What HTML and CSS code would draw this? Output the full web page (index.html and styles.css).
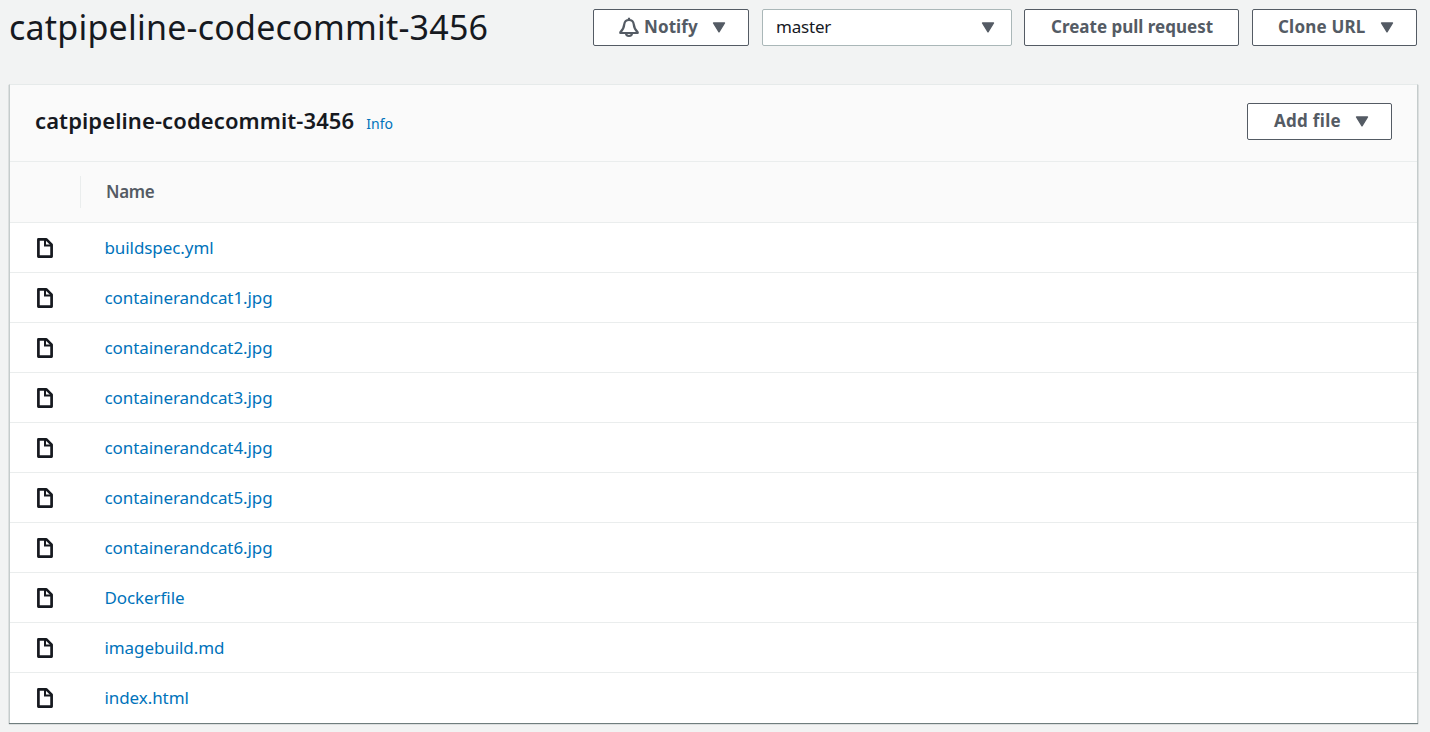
FILE: index.html
```
<!DOCTYPE html>
<html lang="en">
<head>
<meta charset="utf-8">
<title>catpipeline-codecommit-3456</title>
<link rel="stylesheet" href="styles.css">
</head>
<body>
<svg class="sprite" width="0" height="0" aria-hidden="true">
  <symbol id="file" viewBox="0 0 16 20"><path d="M1.400 1.400h8L14.600 6.600v12H1.400z" fill="none" stroke="currentColor" stroke-width="2.700" stroke-linejoin="round"/><path d="M8 1.500v6h6" fill="none" stroke="currentColor" stroke-width="2"/></symbol>
  <symbol id="caret" viewBox="0 0 14 11"><path d="M1.500 1h11L7 9.800z" fill="currentColor" stroke="currentColor" stroke-width="1.400" stroke-linejoin="round"/></symbol>
  <symbol id="bell" viewBox="0 0 20 21"><path d="M10 3C7.200 3 5.600 4.600 5.300 7.200 5 10.500 3.800 13 1.300 15.400v.6h17.400v-.6C16.200 13 15 10.500 14.700 7.200 14.400 4.600 12.800 3 10 3z" fill="none" stroke="currentColor" stroke-width="2.200" stroke-linejoin="round"/><path d="M10 .800v2M7 16a3 3 0 0 0 6 0" fill="none" stroke="currentColor" stroke-width="2.200"/></symbol>
</svg>
<header class="page-header">
  <h1 class="page-title">catpipeline-codecommit-3456</h1>
  <div class="actions">
    <button class="btn notify"><svg class="bell"><use href="#bell"/></svg><span>Notify</span><svg class="caret"><use href="#caret"/></svg></button>
    <button class="select"><span>master</span><svg class="caret"><use href="#caret"/></svg></button>
    <button class="btn pull">Create pull request</button>
    <button class="btn clone"><span>Clone URL</span><svg class="caret"><use href="#caret"/></svg></button>
  </div>
</header>
<main class="panel">
  <div class="panel-header">
    <h2 class="panel-title">catpipeline-codecommit-3456</h2>
    <a class="info">Info</a>
    <button class="btn add"><span>Add file</span><svg class="caret"><use href="#caret"/></svg></button>
  </div>
  <div class="columns"><div class="icon-col"></div><div class="name-col">Name</div></div>
  <ul class="files">
    <li class="file"><svg class="file-icon"><use href="#file"/></svg><a>buildspec.yml</a></li>
    <li class="file"><svg class="file-icon"><use href="#file"/></svg><a>containerandcat1.jpg</a></li>
    <li class="file"><svg class="file-icon"><use href="#file"/></svg><a>containerandcat2.jpg</a></li>
    <li class="file"><svg class="file-icon"><use href="#file"/></svg><a>containerandcat3.jpg</a></li>
    <li class="file"><svg class="file-icon"><use href="#file"/></svg><a>containerandcat4.jpg</a></li>
    <li class="file"><svg class="file-icon"><use href="#file"/></svg><a>containerandcat5.jpg</a></li>
    <li class="file"><svg class="file-icon"><use href="#file"/></svg><a>containerandcat6.jpg</a></li>
    <li class="file"><svg class="file-icon"><use href="#file"/></svg><a>Dockerfile</a></li>
    <li class="file"><svg class="file-icon"><use href="#file"/></svg><a>imagebuild.md</a></li>
    <li class="file"><svg class="file-icon"><use href="#file"/></svg><a>index.html</a></li>
  </ul>
</main>
</body>
</html>
```
FILE: styles.css
```
* { box-sizing: border-box; }
body { margin: 0; padding: 9px 12px 0 9px; height: 732px; overflow: hidden; background: #f2f3f3; color: #16191f; font: 17px/22px "Noto Sans", sans-serif; }
.sprite { position: absolute; }
h1, h2, ul { margin: 0; padding: 0; }
.page-header { display: flex; justify-content: space-between; height: 75px; padding-right: 1px; }
.page-title { font-size: 34px; line-height: 37px; font-weight: 400; letter-spacing: 0.22px; }
.actions { display: flex; gap: 13px; }
.btn, .select { display: flex; align-items: center; height: 37px; border: 1px solid #545b64; border-radius: 2px; background: #fff; color: #545b64; font: 700 17px/22px "Noto Sans", sans-serif; padding: 0 0 2px 25px; white-space: nowrap; }
.caret { width: 14px; height: 11px; color: #545b64; position: relative; top: 1px; margin-left: auto; }
.bell { width: 20px; height: 21px; margin-right: 5px; position: relative; top: 1px; }
.notify { width: 156px; padding-right: 22px; letter-spacing: 0.1px; }
.select { width: 250px; border-color: #aab7b8; color: #16191f; font-weight: 400; letter-spacing: -0.2px; padding: 0 16px 2px 13px; }
.pull { width: 215px; margin-left: -1px; padding-left: 26px; }
.clone { width: 165px; padding-right: 22px; letter-spacing: 0.2px; }
.add { width: 145px; padding-left: 26px; padding-right: 22px; margin-left: auto; letter-spacing: 0.3px; }
.panel { width: 1409px; border-top: 1px solid #e6eaea; border-left: 1px solid #c5cccc; border-right: 1px solid #c5cccc; background: #fff; box-shadow: 0 1px 1px #6f7d7e; }
.panel-header { display: flex; height: 77px; padding: 18px 25px 0; background: #fafafa; border-bottom: 1px solid #eaeded; }
.panel-title { font-size: 22px; line-height: 35px; font-weight: 600; letter-spacing: 0.1px; }
.info { font-size: 14px; line-height: 42px; color: #0073bb; margin-left: 12px; }
.columns { display: flex; align-items: center; height: 61px; background: #fafafa; border-bottom: 1px solid #eaeded; }
.icon-col { width: 71px; height: 32px; border-right: 1px solid #eaeded; }
.name-col { padding-left: 25px; font-weight: 600; color: #545b64; letter-spacing: -0.3px; }
.files { list-style: none; }
.file { display: flex; align-items: center; height: 50px; padding-left: 27px; border-bottom: 1px solid #eaeded; }
.file:last-child { border-bottom: 0; }
.file-icon { width: 16px; height: 20px; margin-right: 51.500px; }
.file a { color: #0073bb; letter-spacing: -0.08px; }
```
